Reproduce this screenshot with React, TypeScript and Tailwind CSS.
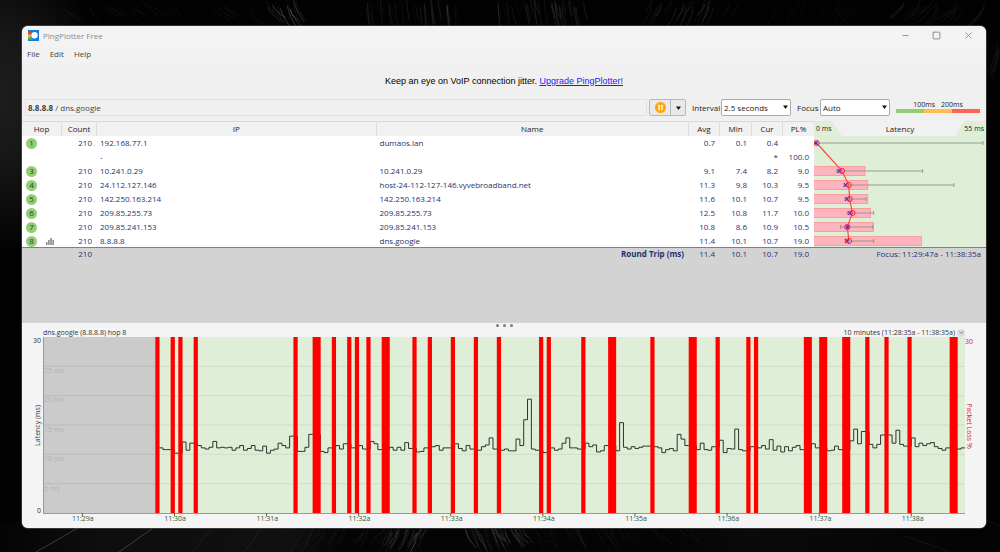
import React, { useState } from 'react';
import { ChevronDown, Minus, Square, X } from 'lucide-react';

interface Hop {
  hop: number | null;
  count: string;
  ip: string;
  name: string;
  avg: number | null;
  min: number | null;
  cur: number | null;
  loss: number | null;
  max: number | null;
}

const hops: Hop[] = [
  { hop: 1, count: '210', ip: '192.168.77.1', name: 'dumaos.lan', avg: 0.7, min: 0.1, cur: 0.4, loss: null, max: 55.6 },
  { hop: null, count: '', ip: '-', name: '', avg: null, min: null, cur: null, loss: 100, max: null },
  { hop: 3, count: '210', ip: '10.241.0.29', name: '10.241.0.29', avg: 9.1, min: 7.4, cur: 8.2, loss: 9, max: 35.7 },
  { hop: 4, count: '210', ip: '24.112.127.146', name: 'host-24-112-127-146.vyvebroadband.net', avg: 11.3, min: 9.8, cur: 10.3, loss: 9.5, max: 46 },
  { hop: 5, count: '210', ip: '142.250.163.214', name: '142.250.163.214', avg: 11.6, min: 10.1, cur: 10.7, loss: 9.5, max: 17 },
  { hop: 6, count: '210', ip: '209.85.255.73', name: '209.85.255.73', avg: 12.5, min: 10.8, cur: 11.7, loss: 10, max: 19.5 },
  { hop: 7, count: '210', ip: '209.85.241.153', name: '209.85.241.153', avg: 10.8, min: 8.6, cur: 10.9, loss: 10.5, max: 19.2 },
  { hop: 8, count: '210', ip: '8.8.8.8', name: 'dns.google', avg: 11.4, min: 10.1, cur: 10.7, loss: 19, max: 19.5 },
];

// one sample every 2.5 seconds, -1 is a lost packet
const firstSlot = 29;
const samples = [
  -1, 11.1, 10.8, 10.8, -1, 10.2, -1, 12.1, 10.7, 11.9, -1, 11.5, 11.1, 10.9, 11.2, 12.2, 11.1, 11.2, 11.1, 11.2,
  10.7, 11.1, 11.5, 10.7, 11, 11.5, 10.7, 10.6, 11.4, 10.2, 10.7, 10.9, 11.9, 11.5, 11.1, 13.1, -1, 10.5, 10.5, 11.2,
  13.4, -1, -1, 10.5, 10.3, 11.1, -1, 11.5, 10.9, 11.8, -1, 11.1, -1, 11.5, 10.9, -1, 12.2, 11.8, 10.8, -1,
  -1, 11.2, 10.7, 11.2, 10.7, 12, 11, -1, 10.4, 10.5, 11.1, -1, 11.3, 11.5, 10.7, 11.1, 11.1, -1, 11.8, 11,
  10.6, 11.5, 10.9, -1, 10.7, 11.3, 11.6, 12.8, 10.9, -1, 10.7, 10.9, 10.6, 10.6, 12.6, 11.5, 15.9, 19.4, 10.9, 10.7,
  -1, 10.3, -1, 11.1, 10.7, 10.9, 11.9, 12.8, 11.1, 11.1, 10.9, -1, 11.9, 11.3, 11.6, 10.4, 10.6, 11.5, -1, -1,
  10.6, 15.4, 11.2, 10.9, 11.3, 11, 11.2, 11.4, 11.4, -1, 11.3, 11.1, 10.3, 10.8, 11, 10.6, 13.4, 12.6, 11.5, -1,
  -1, 10.8, 11.9, 10.8, 10.7, 11.3, -1, 12.4, 10.3, 11, 10.9, 14.3, 10.8, 10.6, -1, 11.3, -1, 11.1, 11.5, 10.9,
  12.5, 10.7, 11.4, 10.4, 11.3, 10.6, 11.2, 11.5, 10.8, -1, -1, 11.8, 11.1, -1, -1, 10.6, 10.7, 11.4, 10.8, -1,
  -1, 12.3, 14.3, 11.8, 13.9, -1, 11.7, 11.1, 11.7, 13.3, -1, 13.3, 11.9, 14.1, 11.7, 11.4, -1, 12.8, 11.3, 11.9,
  11.5, 11.8, 12, 11.3, 11, 10.7, 11.1, -1, -1, 10.9, 11.1,
];

// neighbouring lost packets are drawn as one bar
const lossBars: { start: number; length: number }[] = [];
samples.forEach((v, i) => {
  if (v >= 0) return;
  const slot = firstSlot + i;
  const last = lossBars[lossBars.length - 1];
  if (last && last.start + last.length === slot) last.length += 1;
  else lossBars.push({ start: slot, length: 1 });
});

const linePath = () => {
  let d = '';
  let last = 0;
  samples.forEach((v, i) => {
    const ms = v < 0 ? last : v;
    if (!ms) return;
    const x = firstSlot + i;
    d += d ? `V${30 - ms}` : `M${x} ${30 - ms}`;
    d += `H${x + 1}`;
    last = ms;
  });
  return d;
};

const times = ['11:29a', '11:30a', '11:31a', '11:32a', '11:33a', '11:34a', '11:35a', '11:36a', '11:37a', '11:38a'];
const gridLevels = [25, 20, 15, 10, 5];

const fmt = (v: number | null) => (v === null ? '' : v.toFixed(1));

// Dark fur wallpaper: [x start, x end, y start, length, slant, strokes, opacity]
const furPatches = [
  [60, 290, 0, 14, 14, 60, 0.1],
  [266, 300, -2, 24, 12, 14, 0.4],
  [365, 460, -4, 30, 3, 44, 0.2],
  [495, 585, -4, 30, 4, 40, 0.2],
  [650, 715, -2, 26, -10, 30, 0.22],
  [715, 860, 0, 16, -8, 30, 0.08],
  [900, 1000, 0, 20, -14, 34, 0.14],
  [310, 400, 522, 26, -12, 50, 0.1],
  [385, 430, 522, 22, -9, 36, 0.24],
  [465, 530, 522, 24, 10, 50, 0.24],
  [530, 690, 522, 24, 11, 70, 0.1],
  [986, 1000, 40, 30, -8, 14, 0.1],
];

const Wallpaper: React.FC = () => {
  let seed = 7;
  const rnd = () => {
    seed = (seed * 16807) % 2147483647;
    return seed / 2147483647;
  };
  return (
    <svg className="absolute inset-0 h-full w-full" viewBox="0 0 1000 552" preserveAspectRatio="none" aria-hidden="true">
      <defs>
        <radialGradient id="haze" cx="0" cy="60" r="100" gradientUnits="userSpaceOnUse" gradientTransform="scale(1 1.6)">
          <stop offset="0" stopColor="#1d1d1d" />
          <stop offset="0.35" stopColor="#181818" />
          <stop offset="1" stopColor="#020202" />
        </radialGradient>
        <linearGradient id="floor" x1="0" x2="1" y1="0" y2="0">
          <stop offset="0" stopColor="#040404" />
          <stop offset="0.1" stopColor="#0e0e0e" />
          <stop offset="0.29" stopColor="#101010" />
          <stop offset="0.34" stopColor="#040404" />
          <stop offset="0.67" stopColor="#040404" />
          <stop offset="0.75" stopColor="#0a0a0a" />
          <stop offset="1" stopColor="#030303" />
        </linearGradient>
      </defs>
      <rect width="1000" height="552" fill="#020202" />
      <rect width="1000" height="300" fill="url(#haze)" />
      <rect y="524" width="1000" height="28" fill="url(#floor)" />
      <g stroke="#777" strokeWidth="1" opacity="0.45">
        <path d="M78 528L36 552M153 528L119 552" />
        <path d="M212 528L192 552M262 528L244 552M306 528L290 552M905 536L950 552M986 520L1000 526" opacity="0.3" />
      </g>
      {furPatches.map(([x0, x1, y, len, slant, n, op], p) => (
        <g key={p} stroke="#aaa" strokeWidth="0.8" fill="none">
          {Array.from({ length: n }, (_, i) => {
            const x = x0 + rnd() * (x1 - x0);
            const top = y + rnd() * 12;
            const l = len * (0.4 + rnd() * 0.6);
            const s = slant * (0.6 + rnd() * 0.6);
            return <path key={i} d={`M${x} ${top}q${s * 0.2} ${l * 0.5} ${s} ${l}`} opacity={op * rnd()} />;
          })}
        </g>
      ))}
    </svg>
  );
};

const AppIcon: React.FC = () => (
  <svg className="h-[11px] w-[11px]" viewBox="0 0 22 22" aria-hidden="true">
    <rect width="22" height="22" fill="#0c7fe0" />
    <rect y="3" width="10" height="6" fill="#e8452c" />
    <rect y="9" width="9" height="5" fill="#f5b52e" />
    <rect y="14" width="10" height="5" fill="#58b947" />
    <circle cx="13" cy="10.5" r="7.8" fill="#0c7fe0" />
    <circle cx="13" cy="10.5" r="6.4" fill="#fff" />
  </svg>
);

const DownArrow: React.FC<{ className?: string }> = ({ className = '' }) => (
  <svg className={`h-1 w-[5px] ${className}`} viewBox="0 0 10 8" aria-hidden="true">
    <path d="M0 1h10L5 8z" fill="#111" />
  </svg>
);

const TitleBar: React.FC = () => (
  <div className="flex h-[19px] items-center bg-[#f3f3f3] pr-3 pl-1.5">
    <AppIcon />
    <span className="ml-1 text-[8px] text-[#8c8c8c]">PingPlotter Free</span>
    <div className="ml-auto flex items-center gap-[22px] text-[#8c8c8c]">
      <button type="button" aria-label="Minimize">
        <Minus className="h-[9px] w-[9px]" strokeWidth={2.4} />
      </button>
      <button type="button" aria-label="Maximize">
        <Square className="h-[9px] w-[9px]" strokeWidth={2.6} />
      </button>
      <button type="button" aria-label="Close">
        <X className="h-[11px] w-[11px]" strokeWidth={2} />
      </button>
    </div>
  </div>
);

const Toolbar: React.FC = () => {
  const [interval, setInterval] = useState('2.5 seconds');
  const [focus, setFocus] = useState('Auto');

  return (
    <div className="flex h-[23px] items-start bg-[#f0f0f0] px-[3px] pt-px">
      <div className="flex h-[17px] flex-1 items-center border border-[#e2e2e2] pl-0.5 text-[#444]">
        <b>8.8.8.8</b>&nbsp;/ dns.google
      </div>
      <div className="ml-0.5 flex h-[17px] w-[37px] rounded-xs border border-[#b8b8b8] bg-[#e9e9e9]">
        <button type="button" aria-label="Pause" className="flex flex-1 items-center justify-center border-r border-[#b8b8b8]">
          <svg className="h-[11px] w-[11px]" viewBox="0 0 22 22">
            <circle cx="11" cy="11" r="11" fill="#ffa50a" />
            <rect x="6.6" y="5.5" width="3" height="11" rx="1" fill="#fff" />
            <rect x="12.4" y="5.5" width="3" height="11" rx="1" fill="#fff" />
          </svg>
        </button>
        <button type="button" aria-label="Pause options" className="flex w-3.5 items-center justify-center">
          <DownArrow />
        </button>
      </div>
      <label htmlFor="interval" className="ml-1.5 flex h-[17px] w-[28px] items-center text-[#222]">
        Interval
      </label>
      <div className="relative ml-px h-[17px] w-[70px]">
        <select
          id="interval"
          value={interval}
          onChange={(e) => setInterval(e.target.value)}
          className="h-full w-full appearance-none rounded-xs border border-[#ababab] bg-white pl-0.5 text-[#222]"
        >
          <option>2.5 seconds</option>
          <option>5 seconds</option>
        </select>
        <DownArrow className="pointer-events-none absolute top-[6px] right-[3px]" />
      </div>
      <label htmlFor="focus" className="ml-1.5 flex h-[17px] w-[22px] items-center text-[#222]">
        Focus
      </label>
      <div className="relative ml-px h-[17px] w-[70px]">
        <select
          id="focus"
          value={focus}
          onChange={(e) => setFocus(e.target.value)}
          className="h-full w-full appearance-none rounded-xs border border-[#ababab] bg-white pl-0.5 text-[#222]"
        >
          <option>Auto</option>
          <option>10 minutes</option>
        </select>
        <DownArrow className="pointer-events-none absolute top-[6px] right-[3px]" />
      </div>
      <div className="mr-[3px] ml-1.5 w-[84px] pt-px text-[7px] leading-[9px] text-[#222]">
        <div className="flex justify-center gap-1.5">
          <span>100ms</span>
          <span>200ms</span>
        </div>
        <div className="grid h-1 grid-cols-3">
          <div className="bg-[#92cf70]" />
          <div className="bg-[#ffbf50]" />
          <div className="bg-[#ff6452]" />
        </div>
      </div>
    </div>
  );
};

const px = (ms: number) => 0.5 + ms * 3.03;
const rowY = (i: number) => i * 14 + 7;

const LatencyGraph: React.FC = () => {
  const points = hops
    .map((h, i) => (h.avg === null ? '' : `${px(h.avg)},${rowY(i)}`))
    .filter(Boolean)
    .join(' ');
  return (
    <svg className="block h-[112px] w-full" viewBox="0 0 172 112" preserveAspectRatio="none">
      {hops.map(
        (h, i) =>
          h.avg !== null &&
          h.loss !== null && (
            <rect key={i} x="-1" y={rowY(i) - 4.5} width={h.loss * 5.66 + 1} height="9" fill="#ffb3bf" stroke="#f7958f" strokeWidth="0.8" />
          )
      )}
      {hops.map(
        (h, i) =>
          h.max !== null && (
            <path
              key={i}
              d={`M${px(h.min!)} ${rowY(i)}H${px(h.max)}M${px(h.min!)} ${rowY(i) - 2}v4M${px(h.max)} ${rowY(i) - 2}v4`}
              stroke="#8a948a"
              strokeWidth="0.9"
              fill="none"
            />
          )
      )}
      <polyline points={points} fill="none" stroke="#fb4a42" strokeWidth="1.2" />
      {hops.map(
        (h, i) =>
          h.avg !== null && (
            <g key={i} fill="none">
              <path
                d={`M${px(h.cur!) - 1.8} ${rowY(i) - 1.8}l3.6 3.6m0 -3.6l-3.6 3.6`}
                stroke="#3a20e0"
                strokeWidth="1.1"
              />
              <circle cx={px(h.avg)} cy={rowY(i)} r="2.6" stroke="#f8283c" strokeWidth="1" />
            </g>
          )
      )}
    </svg>
  );
};

const HopTable: React.FC = () => {
  const head = 'border-r border-[#dedede] font-normal';
  return (
    <table className="w-full table-fixed border-separate border-spacing-0 bg-white text-[#1f3170]">
      <colgroup>
        <col className="w-[40px]" />
        <col className="w-[35px]" />
        <col className="w-[29%]" />
        <col />
        <col className="w-[31px]" />
        <col className="w-[32px]" />
        <col className="w-[31px]" />
        <col className="w-[31px]" />
        <col className="w-[172px]" />
      </colgroup>
      <thead>
        <tr className="h-[15px] bg-[#f1f1f1] text-[#222] shadow-[inset_0_1px_0_#d8d8d8]">
          <th className={head}>Hop</th>
          <th className={head}>Count</th>
          <th className={head}>IP</th>
          <th className={head}>Name</th>
          <th className={head}>Avg</th>
          <th className={head}>Min</th>
          <th className={head}>Cur</th>
          <th className="font-normal">PL%</th>
          <th className="relative bg-[#dfefd7] font-normal">
            <svg className="absolute inset-0 h-full w-full" viewBox="0 0 172 15" preserveAspectRatio="none" aria-hidden="true">
              <path d="M18 0H150L141 15H28z" fill="#f1f1f1" />
            </svg>
            <div className="relative flex items-center justify-between px-0.5">
              <span className="w-[30px] text-left text-[7px]">0 ms</span>
              <span>Latency</span>
              <span className="w-[30px] text-right text-[7px]">55 ms</span>
            </div>
          </th>
        </tr>
      </thead>
      <tbody>
        {hops.map((h, i) => (
          <tr key={i} className="h-[14px] text-right">
            <td className="pl-1">
              {h.hop !== null && (
                <div className="flex items-center">
                  <span className="flex h-[11px] w-[11px] items-center justify-center rounded-full bg-[#92cf70] text-[#1f3d50]">
                    {h.hop}
                  </span>
                  {h.hop === 8 && (
                    <svg className="ml-[9px] h-[7px] w-2" viewBox="0 0 8 7" aria-hidden="true">
                      <path d="M0 4h1.6v3H0zM2.1 2h1.6v5H2.1zM4.2 0h1.6v7H4.2zM6.3 2h1.6v5H6.3z" fill="#8b8b8b" />
                    </svg>
                  )}
                </div>
              )}
            </td>
            <td className="pr-[5px]">{h.count}</td>
            <td className="pl-[3px] text-left">{h.ip}</td>
            <td className="pl-[3px] text-left">{h.name}</td>
            <td className="pr-[5px]">{fmt(h.avg)}</td>
            <td className="pr-[5px]">{fmt(h.min)}</td>
            <td className="pr-[5px]">{h.avg === null ? '*' : fmt(h.cur)}</td>
            <td className="pr-[5px]">{fmt(h.loss)}</td>
            {i === 0 && (
              <td rowSpan={8} className="bg-[#dfefd7]">
                <LatencyGraph />
              </td>
            )}
          </tr>
        ))}
      </tbody>
      <tfoot>
        <tr className="h-[14px] bg-[#d3d3d3] text-right align-top shadow-[0_-1px_0_#7c827c]">
          <td />
          <td className="pr-[5px]">210</td>
          <td />
          <td className="pr-[5px] font-bold">Round Trip (ms)</td>
          <td className="pr-[5px]">11.4</td>
          <td className="pr-[5px]">10.1</td>
          <td className="pr-[5px]">10.7</td>
          <td className="pr-[5px]">19.0</td>
          <td className="pr-[5px]">Focus: 11:29:47a - 11:38:35a</td>
        </tr>
      </tfoot>
    </table>
  );
};

const Timeline: React.FC = () => (
  <div className="relative bg-[#f4f4f4] text-[7px] leading-[9px] text-[#333]">
    <div className="absolute inset-x-0 top-[1px] flex justify-center gap-1">
      <span className="h-[3px] w-[3px] rounded-full bg-[#7b7b7b]" />
      <span className="h-[3px] w-[3px] rounded-full bg-[#7b7b7b]" />
      <span className="h-[3px] w-[3px] rounded-full bg-[#7b7b7b]" />
    </div>
    <div className="flex h-[14px] items-end justify-between px-[21px]">
      <span>dns.google (8.8.8.8) hop 8</span>
      <div className="flex items-center gap-0.5">
        <span>10 minutes (11:28:35a - 11:38:35a)</span>
        <button type="button" aria-label="Change time span" className="flex h-2 w-2 items-center justify-center rounded-full bg-[#dcdcdc]">
          <ChevronDown className="h-[7px] w-[7px] text-[#555]" />
        </button>
      </div>
    </div>
    <div className="flex">
      <div className="flex w-[21px] flex-col items-end justify-between pr-0.5 leading-[7px]">
        <span>30</span>
        <span className="rotate-180 [writing-mode:vertical-rl]">Latency (ms)</span>
        <span>0</span>
      </div>
      <div className="relative h-[177px] flex-1 border-b border-l border-[#999] bg-[#dfefd7]">
        <svg className="absolute inset-0 h-full w-full overflow-visible" viewBox="0 0 240 30" preserveAspectRatio="none">
          <rect width={firstSlot} height="30" fill="#cbcbcb" />
          {gridLevels.map((g) => (
            <path key={g} d={`M0 ${30 - g}H240`} stroke="#000" strokeOpacity="0.08" vectorEffect="non-scaling-stroke" />
          ))}
          <path d={linePath()} fill="none" stroke="#2c332c" strokeWidth="1" vectorEffect="non-scaling-stroke" />
          {lossBars.map((b) => (
            <rect key={b.start} x={b.start} width={b.length + 0.1} height="30" fill="#f00" />
          ))}
          {times.map((t, i) => (
            <path key={t} d={`M${10 + i * 24} 30v0.6`} stroke="#4a6a4c" vectorEffect="non-scaling-stroke" />
          ))}
        </svg>
        <div className="absolute inset-0 flex flex-col pt-[29px] text-[#b0b4ad]">
          {gridLevels.map((g) => (
            <span key={g} className="block flex-1">
              {g} ms
            </span>
          ))}
        </div>
      </div>
      <div className="relative flex w-[21px] flex-col items-start text-[#cf2434]">
        <span>30</span>
        <span className="absolute top-1/2 left-0 -translate-y-1/2 [writing-mode:vertical-rl]">Packet Loss %</span>
      </div>
    </div>
    <div className="grid h-[14px] grid-cols-10 px-[21px] text-[#2f5a33]">
      {times.map((t) => (
        <span key={t} className="pl-[29px]">
          {t}
        </span>
      ))}
    </div>
  </div>
);

const App: React.FC = () => {
  return (
    <div className="relative flex min-h-screen bg-black pt-[26px] pr-[14px] pb-6 pl-[22px]">
      <Wallpaper />
      <main className="relative flex flex-1 flex-col overflow-hidden rounded-md bg-[#d3d3d3] font-['Open_Sans','Noto_Sans',sans-serif] text-[8px] leading-[12px] ring-1 ring-[#555]/60">
        <TitleBar />
        <nav className="flex h-[18px] items-center gap-2.5 bg-[#f2f2f2] px-[5px] text-[#444]">
          <button type="button">File</button>
          <button type="button">Edit</button>
          <button type="button">Help</button>
        </nav>
        <p className="flex h-[35px] items-center justify-center bg-[#f0f0f0] font-['Liberation_Sans',Arial,sans-serif] text-[9px] text-black">
          <span>
            Keep an eye on VoIP connection jitter.{' '}
            <a href="#upgrade" className="text-[#1a1aff] underline">
              Upgrade PingPlotter!
            </a>
          </span>
        </p>
        <Toolbar />
        <HopTable />
        <div className="min-h-[60px] flex-1 bg-[#d3d3d3]" />
        <Timeline />
      </main>
    </div>
  );
};

export default App;
